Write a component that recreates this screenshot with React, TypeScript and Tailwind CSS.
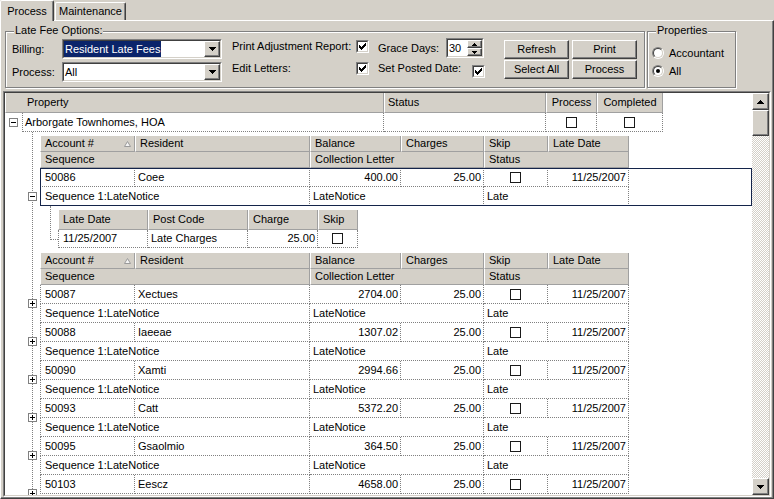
import React from 'react';

const raised =
  'bg-[#d4d0c8] border border-t-white border-l-white border-r-[#404040] border-b-[#404040] shadow-[inset_-1px_-1px_0_#808080]';
const sunkenOuter = 'border border-t-[#808080] border-l-[#808080] border-r-white border-b-white';
const sunkenInner = 'border border-t-[#404040] border-l-[#404040] border-r-[#d4d0c8] border-b-[#d4d0c8]';

function Arrow({ up, w = 7 }: { up?: boolean; w?: number }) {
  const rows = Math.ceil(w / 2);
  return (
    <svg width={w} height={rows} shapeRendering="crispEdges">
      {Array.from({ length: rows }, (_, i) => (
        <rect key={i} x={i} y={up ? rows - 1 - i : i} width={w - 2 * i} height={1} fill="#000" />
      ))}
    </svg>
  );
}

function CheckMark() {
  const rows: [number, number][][] = [
    [[6, 1]],
    [[5, 2]],
    [[0, 1], [4, 3]],
    [[0, 2], [3, 3]],
    [[0, 5]],
    [[1, 3]],
    [[2, 1]],
  ];
  return (
    <svg width="7" height="7" shapeRendering="crispEdges">
      {rows.map((segs, y) =>
        segs.map(([x, w]) => <rect key={`${y}-${x}`} x={x} y={y} width={w} height={1} fill="#000" />)
      )}
    </svg>
  );
}

function Check({ checked, className = '' }: { checked?: boolean; className?: string }) {
  return (
    <div className={`w-[13px] h-[13px] shrink-0 ${sunkenOuter} ${className}`}>
      <div className={`w-full h-full bg-white flex items-center justify-center ${sunkenInner}`}>
        {checked && <CheckMark />}
      </div>
    </div>
  );
}

function Radio({ checked }: { checked?: boolean }) {
  return (
    <div className="w-[12px] h-[12px] shrink-0 rounded-full border border-t-[#808080] border-l-[#808080] border-r-white border-b-white">
      <div className="w-full h-full rounded-full bg-white flex items-center justify-center border border-t-[#404040] border-l-[#404040] border-r-[#d4d0c8] border-b-[#d4d0c8]">
        {checked && <div className="w-[4px] h-[4px] rounded-full bg-black" />}
      </div>
    </div>
  );
}

function Combo({ value, selected }: { value: string; selected?: boolean }) {
  return (
    <div className={`w-[160px] h-[20px] ${sunkenOuter}`}>
      <div className={`h-full bg-white flex ${sunkenInner}`}>
        <div className="flex-1 flex">
          <span className={`flex items-center px-[1px] ${selected ? 'bg-[#0a246a] text-white' : ''}`}>{value}</span>
        </div>
        <div className={`w-[16px] h-[16px] flex items-center justify-center ${raised}`}>
          <Arrow />
        </div>
      </div>
    </div>
  );
}

function Spin() {
  return (
    <div className={`w-[38px] h-[20px] ${sunkenOuter}`}>
      <div className={`h-full bg-white flex ${sunkenInner}`}>
        <span className="flex-1 pl-[1px] flex items-center">30</span>
        <div className="w-[15px] flex flex-col">
          <div className={`h-[8px] flex items-center justify-center ${raised}`}>
            <Arrow up w={5} />
          </div>
          <div className={`h-[8px] flex items-center justify-center ${raised}`}>
            <Arrow w={5} />
          </div>
        </div>
      </div>
    </div>
  );
}

function Btn({ children }: { children: React.ReactNode }) {
  return <div className={`h-[19px] flex items-center justify-center ${raised}`}>{children}</div>;
}

function Exp({ open }: { open?: boolean }) {
  return (
    <div className="relative w-[9px] h-[9px] border border-[#808080] bg-white">
      <div className="absolute left-[1px] top-[3px] w-[5px] h-px bg-black" />
      {!open && <div className="absolute left-[3px] top-[1px] w-px h-[5px] bg-black" />}
    </div>
  );
}

function GridCheck() {
  return <div className="w-[11px] h-[11px] border border-[#1a1a1a] bg-white" />;
}

const headBase =
  'shrink-0 h-full flex items-center whitespace-nowrap bg-[#d4d0c8] border-l border-r border-b border-l-white border-r-[#a0a0a0] border-b-[#a0a0a0]';

function H({ w, children, cls = 'pl-[4px]' }: { w: string; children?: React.ReactNode; cls?: string }) {
  return <div className={`${headBase} ${w} ${cls}`}>{children}</div>;
}

const cellBase =
  'shrink-0 h-full flex items-center whitespace-nowrap bg-white border-r border-b border-dotted border-r-[#808080] border-b-[#808080]';

function D({
  w,
  children,
  first,
  align = 'left',
}: {
  w: string;
  children?: React.ReactNode;
  first?: boolean;
  align?: 'left' | 'right' | 'center';
}) {
  const a =
    align === 'right' ? 'justify-end pr-[2px]' : align === 'center' ? 'justify-center' : first ? 'pl-[4px]' : 'pl-[3px]';
  return <div className={`${cellBase} ${w} ${a} ${first ? 'border-l border-l-[#808080]' : ''}`}>{children}</div>;
}

function SortTri() {
  return (
    <svg width="7" height="6" className="mr-[3px]">
      <polygon points="3.5,0.5 6.5,5.5 0.5,5.5" fill="#f4f4f4" stroke="#9a9a9a" strokeWidth="1" />
    </svg>
  );
}

function BandHeader() {
  return (
    <div>
      <div className="flex h-[16px]">
        <H w="w-[95px]" cls="pl-[4px] justify-between">
          <span>Account #</span>
          <SortTri />
        </H>
        <H w="w-[175px]">Resident</H>
        <H w="w-[91px]">Balance</H>
        <H w="w-[83px]">Charges</H>
        <H w="w-[64px]">Skip</H>
        <H w="w-[81px]">Late Date</H>
      </div>
      <div className="flex h-[16px]">
        <H w="w-[270px]">Sequence</H>
        <H w="w-[174px]">Collection Letter</H>
        <H w="w-[145px]">Status</H>
      </div>
    </div>
  );
}

type Rec = { acct: string; name: string; bal: string };

// last visible record is cut by the grid's bottom edge, so its second row is left out
function Record({ r, selected, last }: { r: Rec; selected?: boolean; last?: boolean }) {
  return (
    <div className="relative">
      <div className="flex h-[19px]">
        <D w="w-[95px]" first>
          {r.acct}
        </D>
        <D w="w-[175px]">{r.name}</D>
        <D w="w-[91px]" align="right">
          {r.bal}
        </D>
        <D w="w-[83px]" align="right">
          25.00
        </D>
        <D w="w-[64px]" align="center">
          <GridCheck />
        </D>
        <D w="w-[81px]" align="right">
          11/25/2007
        </D>
      </div>
      {!last && (
        <div className="flex h-[19px]">
          <D w="w-[270px]" first>
            Sequence 1:LateNotice
          </D>
          <D w="w-[174px]">LateNotice</D>
          <D w="w-[145px]">Late</D>
        </div>
      )}
      <div className={`absolute -left-[12px] ${selected ? 'top-[24px]' : 'top-[14px]'}`}>
        <Exp open={selected} />
      </div>
      {selected && <div className="absolute inset-0 border border-[#14244a] pointer-events-none" />}
    </div>
  );
}

const records: Rec[] = [
  { acct: '50087', name: 'Xectues', bal: '2704.00' },
  { acct: '50088', name: 'Iaeeae', bal: '1307.02' },
  { acct: '50090', name: 'Xamti', bal: '2994.66' },
  { acct: '50093', name: 'Catt', bal: '5372.20' },
  { acct: '50095', name: 'Gsaolmio', bal: '364.50' },
  { acct: '50103', name: 'Eescz', bal: '4658.00' },
];

export default function App() {
  return (
    <div className="w-[774px] h-[499px] bg-[#d4d0c8] text-[11px] leading-[13px] text-black font-['Liberation_Sans',Arial,sans-serif] overflow-hidden select-none">
      {/* tabs */}
      <div className="h-[20px] flex items-end">
        <div className="relative z-10 -mb-px h-[21px] w-[54px] flex items-center justify-center bg-[#d4d0c8] border-l border-t border-r border-l-white border-t-white border-r-[#404040] shadow-[inset_-1px_0_0_#808080] rounded-t-[2px]">
          Process
        </div>
        <div className="h-[18px] w-[71px] ml-px flex items-center justify-center bg-[#d4d0c8] border-l border-t border-r border-l-white border-t-white border-r-[#404040] shadow-[inset_-1px_0_0_#808080] rounded-t-[2px]">
          Maintenance
        </div>
      </div>

      <div className="h-[479px] pl-[2px] border border-t-white border-l-white border-r-[#404040] border-b-[#404040] shadow-[inset_-1px_-1px_0_#808080]">
        {/* option group boxes */}
        <div className="flex gap-[2px] mt-[10px] ml-[2px]">
          <div className="relative w-[640px] h-[57px] flex items-start pl-[6px] border border-[#808080] shadow-[inset_1px_1px_0_#fff,1px_1px_0_#fff]">
            <span className="absolute left-[8px] -top-[8px] px-[1px] bg-[#d4d0c8]">Late Fee Options:</span>

            <div className="flex flex-col gap-[3px] mt-[7px]">
              <div className="flex items-center h-[20px]">
                <span className="w-[50px]">Billing:</span>
                <Combo value="Resident Late Fees" selected />
              </div>
              <div className="flex items-center h-[20px]">
                <span className="w-[50px]">Process:</span>
                <Combo value="All" />
              </div>
            </div>

            <div className="flex flex-col gap-[9px] ml-[10px] mt-[8px]">
              <div className="flex items-center h-[13px]">
                <span className="w-[124px]">Print Adjustment Report:</span>
                <Check checked />
              </div>
              <div className="flex items-center h-[13px]">
                <span className="w-[124px]">Edit Letters:</span>
                <Check checked />
              </div>
            </div>

            <div className="flex flex-col ml-[9px] mt-[6px]">
              <div className="flex items-center h-[20px]">
                <span className="w-[68px]">Grace Days:</span>
                <Spin />
              </div>
              <div className="flex items-start mt-[4px]">
                <span className="w-[94px]">Set Posted Date:</span>
                <Check checked className="mt-[3px]" />
              </div>
            </div>

            <div className="grid grid-cols-[65px_65px] gap-x-[3px] gap-y-[1px] ml-[19px] mt-[8px]">
              <Btn>Refresh</Btn>
              <Btn>Print</Btn>
              <Btn>Select All</Btn>
              <Btn>Process</Btn>
            </div>
          </div>

          <div className="relative w-[89px] h-[57px] border border-[#808080] shadow-[inset_1px_1px_0_#fff,1px_1px_0_#fff]">
            <span className="absolute left-[8px] -top-[8px] px-[1px] bg-[#d4d0c8]">Properties</span>
            <div className="flex flex-col gap-[6px] mt-[15px] pl-[4px]">
              <div className="flex items-center h-[12px]">
                <Radio />
                <span className="ml-[5px]">Accountant</span>
              </div>
              <div className="flex items-center h-[12px]">
                <Radio checked />
                <span className="ml-[5px]">All</span>
              </div>
            </div>
          </div>
        </div>

        {/* grid */}
        <div className={`w-[768px] h-[406px] mt-[3px] ${sunkenOuter}`}>
          <div className={`h-full flex ${sunkenInner}`}>
            <div className="relative flex-1 bg-white overflow-hidden">
              {/* tree connectors */}
              <div className="absolute left-[27px] top-[39px] bottom-0 border-l border-dotted border-l-[#808080]" />
              <div className="absolute left-[45px] top-[113px] w-[8px] h-[34px] border-l border-b border-dotted border-l-[#808080] border-b-[#808080]" />

              <div className="flex h-[20px]">
                <H w="w-[379px]" cls="pl-[21px]">
                  Property
                </H>
                <H w="w-[162px]" cls="pl-[3px]">
                  Status
                </H>
                <H w="w-[51px]" cls="justify-center">
                  Process
                </H>
                <H w="w-[66px]" cls="justify-center">
                  Completed
                </H>
              </div>

              <div className="flex h-[19px]">
                <div className="w-[17px] flex items-center justify-center">
                  <Exp open />
                </div>
                <div className={`${cellBase} w-[362px] pl-[2px] border-l border-l-[#808080]`}>Arborgate Townhomes, HOA</div>
                <D w="w-[162px]" />
                <D w="w-[51px]" align="center">
                  <GridCheck />
                </D>
                <D w="w-[66px]" align="center">
                  <GridCheck />
                </D>
              </div>

              <div className="ml-[35px] mt-[4px]">
                <BandHeader />
                <Record r={{ acct: '50086', name: 'Coee', bal: '400.00' }} selected />

                <div className="ml-[18px] mt-[4px]">
                  <div className="flex h-[20px]">
                    <H w="w-[90px]">Late Date</H>
                    <H w="w-[100px]">Post Code</H>
                    <H w="w-[70px]">Charge</H>
                    <H w="w-[40px]">Skip</H>
                  </div>
                  <div className="flex h-[18px]">
                    <D w="w-[90px]" first>
                      11/25/2007
                    </D>
                    <D w="w-[100px]">Late Charges</D>
                    <D w="w-[70px]" align="right">
                      25.00
                    </D>
                    <D w="w-[40px]" align="center">
                      <GridCheck />
                    </D>
                  </div>
                </div>

                <div className="mt-[5px]">
                  <BandHeader />
                  {records.map((r, i) => (
                    <Record key={r.acct} r={r} last={i === records.length - 1} />
                  ))}
                </div>
              </div>
            </div>

            {/* scrollbar */}
            <div className="w-[17px] flex flex-col bg-[image:repeating-conic-gradient(#ffffff_0%_25%,#d4d0c8_0%_50%)] bg-[length:2px_2px]">
              <div className={`h-[17px] flex items-center justify-center ${raised}`}>
                <Arrow up />
              </div>
              <div className={`h-[26px] ${raised}`} />
              <div className="flex-1" />
              <div className={`h-[17px] flex items-center justify-center ${raised}`}>
                <Arrow />
              </div>
            </div>
          </div>
        </div>
      </div>
    </div>
  );
}
